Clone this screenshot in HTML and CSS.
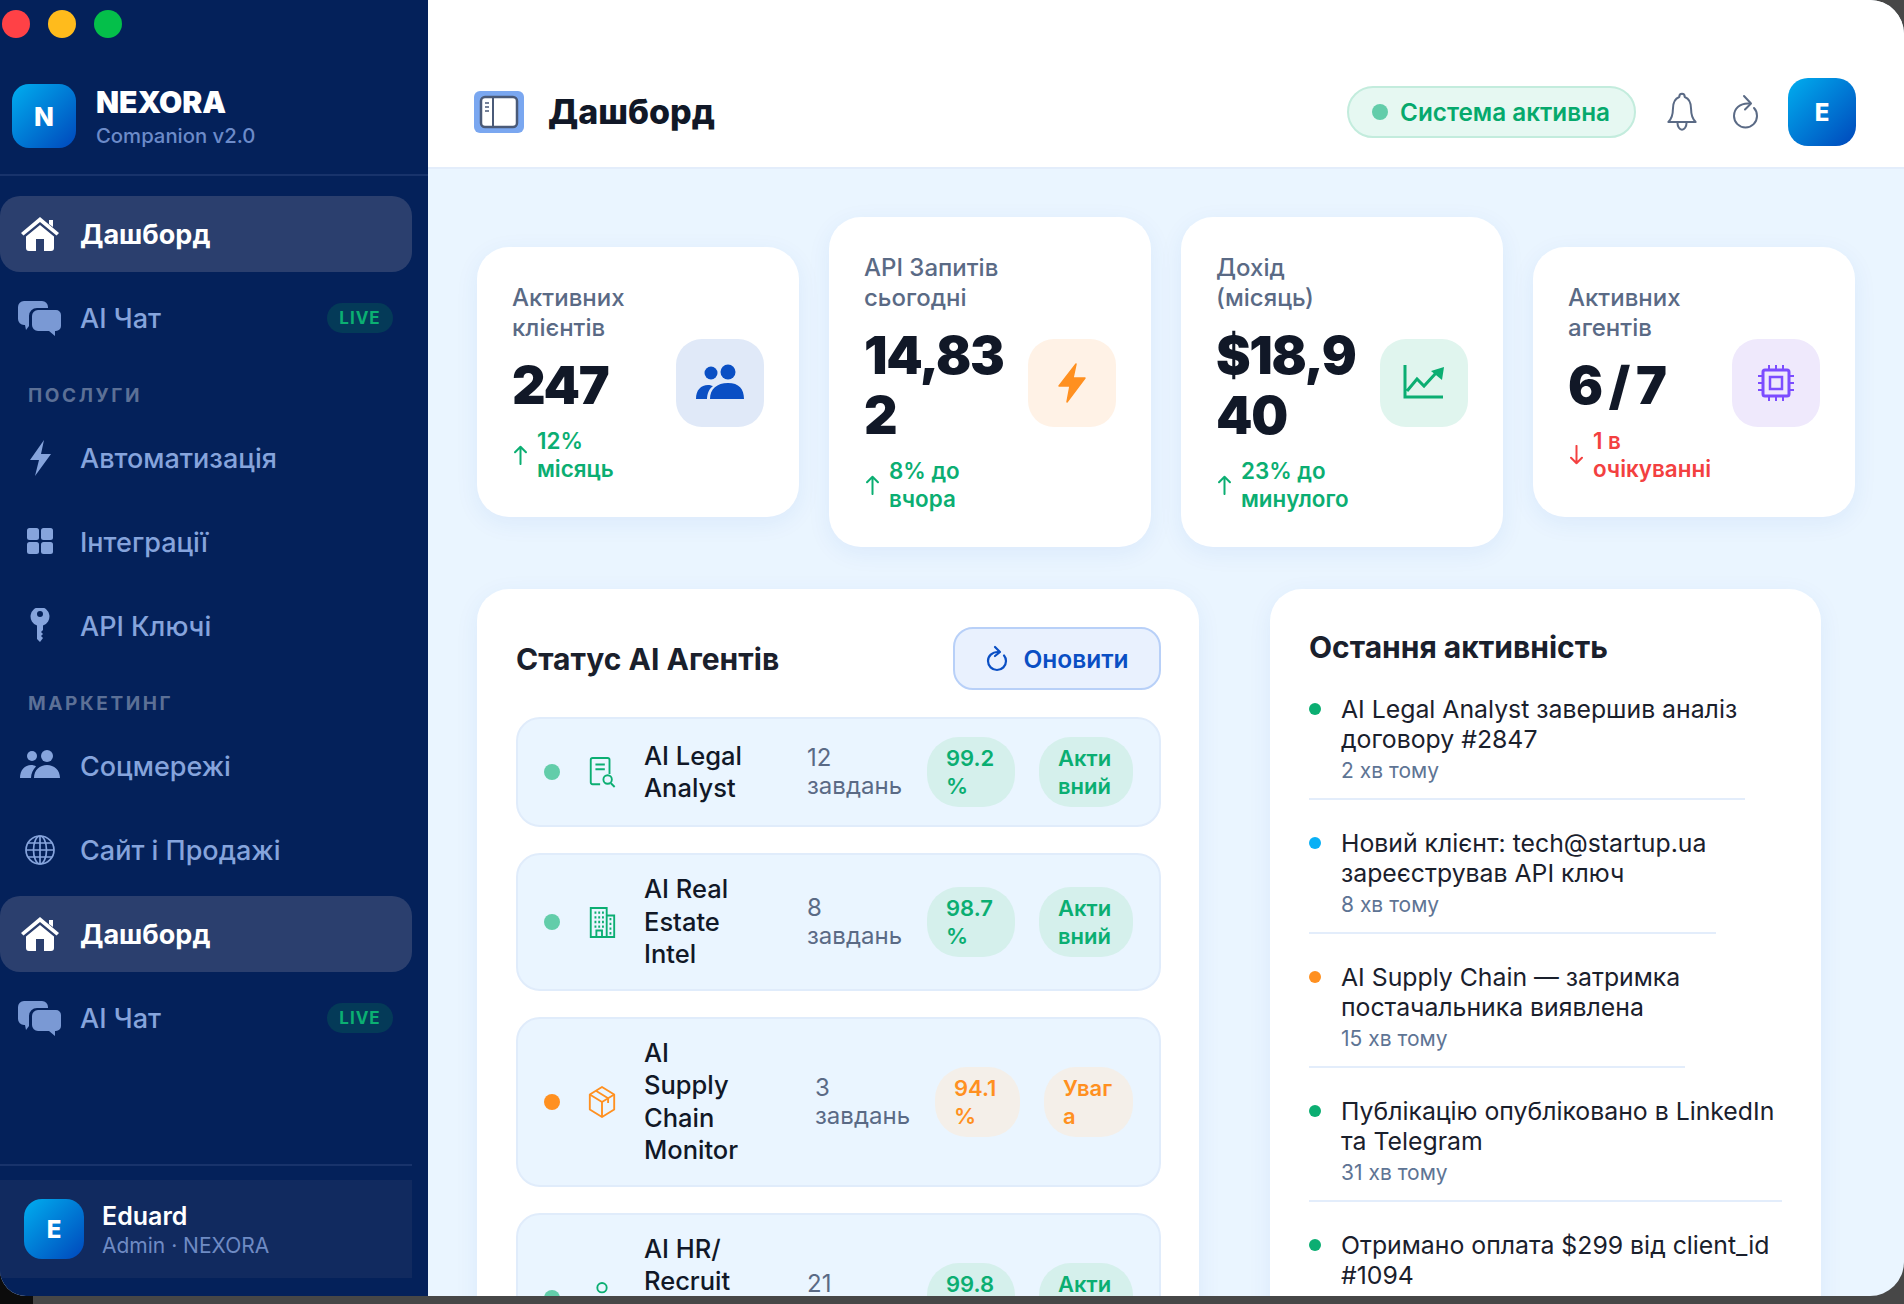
FILE: index.html
```html
<!DOCTYPE html>
<html lang="uk">
<head>
<meta charset="utf-8">
<title>NEXORA Companion</title>
<link rel="stylesheet" href="styles.css">
</head>
<body>
<div class="window">
  <aside class="sidebar">
    <div class="lights"><span class="light red"></span><span class="light yellow"></span><span class="light green"></span></div>
    <div class="brand">
      <div class="logo">N</div>
      <div class="brand-text"><div class="brand-name">NEXORA</div><div class="brand-sub">Companion v2.0</div></div>
    </div>
    <nav class="nav">
      <a class="nav-item active"><svg class="nav-icon" viewBox="0 0 40 36"><path fill="currentColor" d="M20 1 L39 17 L36.5 19.5 L20 6 L3.5 19.5 L1 17 Z M29 4h4v7l-4-3z"/><path fill="currentColor" fill-rule="evenodd" d="M20 9 L34 20.5V32a3 3 0 0 1-3 3H9a3 3 0 0 1-3-3V20.5Z M16 23v12h8V23Z"/></svg><span>Дашборд</span></a>
      <a class="nav-item"><svg class="nav-icon chat" viewBox="0 0 44 36"><path fill="currentColor" d="M6 1h18a6 6 0 0 1 6 6v1H19a8 8 0 0 0-8 8v10l-3 4-1-5H6a6 6 0 0 1-6-6V7a6 6 0 0 1 6-6z"/><path fill="currentColor" d="M20 10h18a5 5 0 0 1 5 5v11a5 5 0 0 1-5 5h-1v5l-6-5H20a6 6 0 0 1-6-6V16a6 6 0 0 1 6-6z"/></svg><span>AI Чат</span><span class="live">LIVE</span></a>
      <div class="nav-label">ПОСЛУГИ</div>
      <a class="nav-item"><svg class="nav-icon" viewBox="0 0 40 36"><path fill="currentColor" d="M24 0 L10 20 H19 L15 36 L31 14 H21 Z"/></svg><span>Автоматизація</span></a>
      <a class="nav-item"><svg class="nav-icon" viewBox="0 0 40 36"><rect fill="currentColor" x="7" y="4" width="12" height="12" rx="2.5"/><rect fill="currentColor" x="21" y="4" width="12" height="12" rx="2.5"/><rect fill="currentColor" x="7" y="18" width="12" height="12" rx="2.5"/><rect fill="currentColor" x="21" y="18" width="12" height="12" rx="2.5"/></svg><span>Інтеграції</span></a>
      <a class="nav-item"><svg class="nav-icon" viewBox="0 0 40 36"><path fill="currentColor" fill-rule="evenodd" d="M20-1a9.500 9.500 0 0 1 3 18.500V22l-2 2 2 2-2 2 2 2-3 4-3-3V17.500A9.500 9.500 0 0 1 20-1Zm0 4a3 3 0 1 0 0 6 3 3 0 0 0 0-6Z"/></svg><span>API Ключі</span></a>
      <div class="nav-label">МАРКЕТИНГ</div>
      <a class="nav-item"><svg class="nav-icon" viewBox="0 0 40 36"><circle fill="currentColor" cx="12" cy="8" r="5"/><circle fill="currentColor" cx="27" cy="8" r="6"/><path fill="currentColor" d="M0 30c0-8 5-13 11-13 2 0 4 .5 5 1.500-3 3-5 7-5 11.500zM14 30c0-8 6-13 13-13s13 5 13 13z"/></svg><span>Соцмережі</span></a>
      <a class="nav-item"><svg class="nav-icon" viewBox="0 0 40 36" fill="none" stroke="currentColor" stroke-width="1.700"><circle cx="20" cy="18" r="14"/><ellipse cx="20" cy="18" rx="6.500" ry="14"/><path d="M20 4v28M6 18h28M8 11h24M8 25h24"/></svg><span>Сайт і Продажі</span></a>
      <a class="nav-item active"><svg class="nav-icon" viewBox="0 0 40 36"><path fill="currentColor" d="M20 1 L39 17 L36.5 19.5 L20 6 L3.5 19.5 L1 17 Z M29 4h4v7l-4-3z"/><path fill="currentColor" fill-rule="evenodd" d="M20 9 L34 20.5V32a3 3 0 0 1-3 3H9a3 3 0 0 1-3-3V20.5Z M16 23v12h8V23Z"/></svg><span>Дашборд</span></a>
      <a class="nav-item"><svg class="nav-icon chat" viewBox="0 0 44 36"><path fill="currentColor" d="M6 1h18a6 6 0 0 1 6 6v1H19a8 8 0 0 0-8 8v10l-3 4-1-5H6a6 6 0 0 1-6-6V7a6 6 0 0 1 6-6z"/><path fill="currentColor" d="M20 10h18a5 5 0 0 1 5 5v11a5 5 0 0 1-5 5h-1v5l-6-5H20a6 6 0 0 1-6-6V16a6 6 0 0 1 6-6z"/></svg><span>AI Чат</span><span class="live">LIVE</span></a>
    </nav>
    <div class="side-foot">
      <div class="user">
        <div class="user-avatar">E</div>
        <div class="user-text"><div class="user-name">Eduard</div><div class="user-role">Admin · NEXORA</div></div>
      </div>
    </div>
  </aside>

  <main class="main">
    <header class="topbar">
      <div class="sidebar-toggle"><svg viewBox="0 0 50 42"><rect x="7" y="6" width="36" height="30" rx="4" fill="#fff" stroke="#4a5a78" stroke-width="2.500"/><path d="M19 6v30" stroke="#4a5a78" stroke-width="2"/><path d="M11 12h4M11 16h4M11 20h4" stroke="#4a5a78" stroke-width="1.500"/></svg></div>
      <h1 class="page-title">Дашборд</h1>
      <div class="status-pill"><span class="status-dot"></span>Система активна</div>
      <svg class="bell" viewBox="0 0 34 44" fill="none" stroke="#5a6a85" stroke-width="2.200" stroke-linejoin="round" stroke-linecap="round"><path d="M17 2c2 0 3 1.500 3 3.500C26 7.500 27 13 27 19c0 7 2 11 5 14H2c3-3 5-7 5-14 0-6 1-11.500 7-13.500C14 3.500 15 2 17 2Z"/><path d="M12 33.500c0 5 2.500 8 5 8s5-3 5-8"/></svg>
      <svg class="reload" viewBox="0 0 28 38" fill="none" stroke="#5a6a85" stroke-width="2" stroke-linecap="round" stroke-linejoin="round"><path d="M18 10.500C9 10 3 15.500 3 23a11.500 11.500 0 0 0 23 0c0-3-1-6-3-8"/><path d="M13 3l7 7.500-6 6"/></svg>
      <div class="top-avatar">E</div>
    </header>

    <div class="content">
      <section class="stats">
        <article class="stat">
          <div class="stat-body">
            <div class="stat-label">Активних клієнтів</div>
            <div class="stat-value">247</div>
            <div class="delta up"><svg class="arrow" viewBox="0 0 16 22"><path d="M8 21V2M2 8l6-6 6 6"/></svg><span>12% місяць</span></div>
          </div>
          <div class="stat-icon blue"><svg viewBox="0 0 48 36"><circle cx="15" cy="8" r="6.500" fill="currentColor"/><circle cx="32" cy="7" r="7.500" fill="currentColor"/><path fill="currentColor" d="M0 34c0-9 5-14 12-14 2 0 3 .5 5 1-4 3-6 8-6 13zM14 34c0-10 7-16 18-16s16 6 16 16z"/></svg></div>
        </article>
        <article class="stat">
          <div class="stat-body">
            <div class="stat-label">API Запитів сьогодні</div>
            <div class="stat-value">14,832</div>
            <div class="delta up"><svg class="arrow" viewBox="0 0 16 22"><path d="M8 21V2M2 8l6-6 6 6"/></svg><span>8% до вчора</span></div>
          </div>
          <div class="stat-icon orange"><svg viewBox="0 0 48 40"><path fill="currentColor" stroke="currentColor" stroke-width="1.500" stroke-linejoin="round" d="M28 1 L11 23 H22 L19 39 L37 15 H25 Z"/></svg></div>
        </article>
        <article class="stat">
          <div class="stat-body">
            <div class="stat-label">Дохід (місяць)</div>
            <div class="stat-value">$18,940</div>
            <div class="delta up"><svg class="arrow" viewBox="0 0 16 22"><path d="M8 21V2M2 8l6-6 6 6"/></svg><span>23% до минулого</span></div>
          </div>
          <div class="stat-icon mint"><svg viewBox="0 0 48 40"><path fill="none" stroke="currentColor" stroke-width="3" d="M5 2v32h38M7 28l10-12 7 7 12-13"/><path fill="currentColor" d="M44 4l-2 13-11-9z"/></svg></div>
        </article>
        <article class="stat">
          <div class="stat-body">
            <div class="stat-label">Активних агентів</div>
            <div class="stat-value">6 / 7</div>
            <div class="delta down"><svg class="arrow" viewBox="0 0 16 22"><path d="M8 1v19M2 14l6 6 6-6"/></svg><span>1 в очікуванні</span></div>
          </div>
          <div class="stat-icon purple"><svg viewBox="0 0 48 40" fill="none" stroke="currentColor"><rect x="11" y="7" width="26" height="26" rx="2" stroke-width="3"/><rect x="18" y="14" width="12" height="12" stroke-width="2.500"/><path stroke-width="2" d="M17 2v4M24 2v4M31 2v4M17 34v4M24 34v4M31 34v4M6 13h4M6 20h4M6 27h4M38 13h4M38 20h4M38 27h4"/></svg></div>
        </article>
      </section>

      <section class="panels">
        <div class="panel agents">
          <div class="panel-head">
            <h2 class="panel-title">Статус AI Агентів</h2>
            <button class="refresh"><svg viewBox="0 0 24 28" fill="none" stroke="currentColor" stroke-width="2.200" stroke-linecap="round" stroke-linejoin="round"><path d="M13 7C7 7 3 11 3 16a9 9 0 0 0 18 0c0-2-.7-4-2-5.500"/><path d="M10 2l5 5-5 4"/></svg>Оновити</button>
          </div>
          <div class="agent">
            <span class="dot ok"></span>
            <svg class="agent-icon ok-ico" viewBox="0 0 32 36" fill="none" stroke="currentColor" stroke-width="2"><path d="M14 31H6a2 2 0 0 1-2-2V5a2 2 0 0 1 2-2h16a2 2 0 0 1 2 2v15"/><path d="M9 10h10M9 15h10"/><circle cx="22" cy="26" r="4.500"/><path d="M25.500 30l4 4"/></svg>
            <div class="agent-name">AI Legal Analyst</div>
            <div class="agent-tasks">12 завдань</div>
            <div class="pill good pct">99.2%</div>
            <div class="pill good state">Активний</div>
          </div>
          <div class="agent">
            <span class="dot ok"></span>
            <svg class="agent-icon ok-ico" viewBox="0 0 32 36" fill="none" stroke="currentColor" stroke-width="2"><path d="M4 34V3h17v31zM21 11h8v23H3M10 34v-7h6v7"/><path stroke-width="2.500" d="M8 8h2M12 8h2M16 8h2M8 13h2M12 13h2M16 13h2M8 18h2M12 18h2M16 18h2M8 23h2M12 23h2M16 23h2M24 15h2M24 20h2M24 25h2M24 30h2"/></svg>
            <div class="agent-name">AI Real Estate Intel</div>
            <div class="agent-tasks">8 завдань</div>
            <div class="pill good pct">98.7%</div>
            <div class="pill good state">Активний</div>
          </div>
          <div class="agent">
            <span class="dot warn"></span>
            <svg class="agent-icon warn-ico" viewBox="0 0 32 36" fill="none" stroke="currentColor" stroke-width="2" stroke-linejoin="round"><path d="M16 2l13 8v16l-13 8-13-8V10z"/><path d="M3 10l13 8 13-8M16 18v16M9.500 6l13 8v5"/></svg>
            <div class="agent-name">AI Supply Chain Monitor</div>
            <div class="agent-tasks">3 завдань</div>
            <div class="pill caution pct narrow">94.1%</div>
            <div class="pill caution state narrow-state">Увага</div>
          </div>
          <div class="agent">
            <span class="dot ok"></span>
            <svg class="agent-icon ok-ico" viewBox="0 0 32 36" fill="none" stroke="currentColor" stroke-width="2"><circle cx="16" cy="7" r="5"/><path d="M6 30c0-8 4-13 10-13s10 5 10 13"/></svg>
            <div class="agent-name">AI HR/ Recruit Agent Bot</div>
            <div class="agent-tasks">21 завдань</div>
            <div class="pill good pct">99.8%</div>
            <div class="pill good state">Активний</div>
          </div>
        </div>

        <div class="panel activity">
          <h2 class="panel-title">Остання активність</h2>
          <div class="feed">
            <div class="feed-item w1"><span class="feed-dot g"></span><div><div class="feed-text">AI Legal Analyst завершив аналіз договору #2847</div><div class="feed-time">2 хв тому</div></div></div>
            <div class="feed-item w2"><span class="feed-dot b"></span><div><div class="feed-text">Новий клієнт: tech@startup.ua зареєстрував API ключ</div><div class="feed-time">8 хв тому</div></div></div>
            <div class="feed-item w3"><span class="feed-dot o"></span><div><div class="feed-text">AI Supply Chain — затримка постачальника виявлена</div><div class="feed-time">15 хв тому</div></div></div>
            <div class="feed-item w4"><span class="feed-dot g"></span><div><div class="feed-text">Публікацію опубліковано в LinkedIn та Telegram</div><div class="feed-time">31 хв тому</div></div></div>
            <div class="feed-item w4"><span class="feed-dot g"></span><div><div class="feed-text">Отримано оплата $299 від client_id #1094</div><div class="feed-time">45 хв тому</div></div></div>
          </div>
        </div>
      </section>
    </div>
  </main>
</div>
</body>
</html>
```
FILE: styles.css
```css
* { box-sizing: border-box; }
html, body { margin: 0; height: 100%; overflow: hidden; }
body {
  background: linear-gradient(90deg, #0c0c0c 0 33px, #474747 33px);
  font-family: "Inter", "Noto Sans", sans-serif;
  color: #111827;
}
.window {
  display: flex;
  width: 1904px;
  height: 1296px;
  overflow: hidden;
  border-radius: 0 34px 34px 26px;
  background: #eaf5ff;
}

/* Sidebar */
.sidebar {
  flex: none;
  width: 428px;
  background: #04215a;
  display: flex;
  flex-direction: column;
}
.lights { display: flex; gap: 18px; padding: 10px 0 0 2px; }
.light { width: 28px; height: 28px; border-radius: 50%; }
.red { background: #ff4146; }
.yellow { background: #ffbb1c; }
.green { background: #04bf4a; }
.brand {
  display: flex;
  align-items: center;
  gap: 20px;
  height: 138px;
  padding: 46px 0 26px 12px;
  border-bottom: 2px solid #18336b;
}
.logo, .user-avatar, .top-avatar {
  display: flex;
  align-items: center;
  justify-content: center;
  background: linear-gradient(135deg, #00aeef, #0047bb);
  color: #fff;
  font-weight: 800;
}
.logo { flex: none; width: 64px; height: 64px; border-radius: 17px; font-size: 26px; }
.brand-text { margin-top: 3px; }
.brand-name { font-size: 30px; font-weight: 900; color: #fff; line-height: 34px; }
.brand-sub { margin-top: 2px; font-size: 20.300px; font-weight: 500; color: #6c8bc9; line-height: 30px; }

.nav { display: flex; flex-direction: column; gap: 8px; padding: 20px 16px 0 0; }
.nav-item {
  display: flex;
  align-items: center;
  height: 76px;
  padding: 0 19px 0 20px;
  border-radius: 20px;
  color: #86a4dc;
  font-size: 27px;
  font-weight: 500;
}
.nav-item.active { background: #2b3f6e; color: #fff; font-weight: 700; }
.nav-icon { flex: none; width: 40px; height: 36px; margin-right: 20px; }
.nav-icon.chat { color: #7a99d4; width: 44px; margin-left: -2px; margin-right: 18px; }
.live {
  margin-left: auto;
  width: 66px;
  height: 30px;
  border-radius: 15px;
  background: #043a58;
  color: #0bb072;
  font-size: 17px;
  font-weight: 700;
  letter-spacing: 1px;
  line-height: 30px;
  text-align: center;
}
.nav-label {
  height: 48px;
  padding: 20px 0 0 28px;
  color: #5c7096;
  font-size: 19px;
  font-weight: 700;
  letter-spacing: 2.600px;
  line-height: 24px;
}
.side-foot {
  margin: auto 16px 18px 0;
  padding-top: 14px;
  border-top: 2px solid #18336b;
}
.user {
  display: flex;
  align-items: center;
  gap: 18px;
  height: 98px;
  padding-left: 24px;
  background: #112a5f;
}
.user-avatar { flex: none; width: 60px; height: 60px; border-radius: 18px; font-size: 24px; }
.user-text { padding-top: 2px; }
.user-name { color: #fff; font-size: 25px; font-weight: 600; line-height: 32px; }
.user-role { color: #6f8bc4; font-size: 21px; line-height: 28px; }

/* Main */
.main { flex: 1; min-width: 0; display: flex; flex-direction: column; }
.topbar {
  flex: none;
  display: flex;
  align-items: center;
  height: 169px;
  padding: 78px 48px 21px 46px;
  background: #fff;
  border-bottom: 2px solid #e3edfb;
}
.sidebar-toggle { flex: none; width: 50px; height: 42px; border-radius: 6px; background: #7aa7f0; margin-right: 24px; }
.sidebar-toggle svg { display: block; width: 50px; height: 42px; }
.page-title { margin: 0 auto 0 0; font-size: 34px; font-weight: 800; line-height: 40px; color: #111827; }
.status-pill {
  display: flex;
  align-items: center;
  gap: 12px;
  height: 52px;
  padding: 0 24px 0 23px;
  border: 2px solid #c3ecdd;
  border-radius: 26px;
  background: #e6f8f2;
  color: #06a96d;
  font-size: 24.300px;
  font-weight: 600;
  white-space: nowrap;
}
.status-dot { width: 16px; height: 16px; border-radius: 50%; background: #63cdaa; }
.bell { width: 32px; height: 40px; margin-left: 30px; }
.reload { width: 28px; height: 38px; margin-left: 33px; }
.top-avatar { width: 68px; height: 68px; border-radius: 20px; font-size: 24px; margin-left: 29px; }

.content { flex: 1; min-height: 0; padding: 48px 49px 0; overflow: hidden; }
.stats {
  display: grid;
  grid-template-columns: repeat(4, 322px);
  column-gap: 30px;
  align-items: center;
}
.stat {
  display: flex;
  align-items: center;
  justify-content: space-between;
  padding: 36px 35px 34px;
  border-radius: 32px;
  background: #fff;
  box-shadow: 0 6px 24px rgba(30, 90, 200, .07);
}
.stat-body { width: 148px; }
.stat-label { font-size: 24px; line-height: 30px; font-weight: 500; color: #5a6a85; }
.stat-value {
  margin: 13px 0 11px;
  font-size: 52px;
  font-weight: 900;
  letter-spacing: -1.300px;
  word-spacing: -2px;
  line-height: 60px;
  color: #111827;
  overflow-wrap: anywhere;
}
.delta { display: flex; align-items: center; gap: 9px; margin-left: 1px; font-size: 22.400px; line-height: 28px; font-weight: 600; }
.delta.up { color: #0bae72; }
.delta.down { color: #f34040; }
.arrow { flex: none; width: 15px; height: 20px; fill: none; stroke: currentColor; stroke-width: 2.200; stroke-linecap: round; stroke-linejoin: round; }
.stat-icon { flex: none; display: flex; align-items: center; justify-content: center; width: 88px; height: 88px; border-radius: 26px; }
.stat-icon svg { width: 48px; height: 40px; }
.blue { background: #e0e9f8; color: #0a4fc4; }
.orange { background: #fff2e6; color: #ff9020; }
.mint { background: #e0f5ee; color: #0bae72; }
.purple { background: #efe9fc; color: #7c4dff; }

.panels {
  display: grid;
  grid-template-columns: 722px 551px;
  column-gap: 71px;
  align-items: start;
  margin-top: 42px;
}
.panel {
  padding: 39px;
  border-radius: 32px;
  background: #fff;
  box-shadow: 0 6px 24px rgba(30, 90, 200, .07);
}
.panel-head { display: flex; align-items: center; justify-content: space-between; margin-bottom: 27px; }
.panel.agents { padding-right: 38px; }
.panel-title { margin: 0; font-size: 30px; font-weight: 700; line-height: 38px; color: #1a202c; }
.refresh {
  display: flex;
  align-items: center;
  justify-content: center;
  gap: 14px;
  width: 208px;
  height: 63px;
  margin-top: -1px;
  border: 2px solid #b8d0f8;
  border-radius: 20px;
  background: #e9f1fe;
  color: #0a4fc4;
  font: 600 24.500px "Inter", sans-serif;
}
.refresh svg { width: 24px; height: 28px; }
.agent {
  display: flex;
  align-items: center;
  margin-bottom: 26px;
  padding: 18px 26px;
  border: 2px solid #e0ecfb;
  border-radius: 24px;
  background: #eaf5ff;
}
.dot { flex: none; width: 16px; height: 16px; border-radius: 50%; margin-right: 27px; }
.dot.ok { background: #63cdaa; }
.dot.warn { background: #ff9020; }
.agent-icon { flex: none; width: 30px; height: 34px; margin-right: 27px; }
.ok-ico { color: #0bae72; }
.warn-ico { color: #ff9020; }
.agent-name { width: 105px; margin-right: auto; font-size: 25.500px; font-weight: 500; line-height: 32.500px; color: #111827; }
.agent-tasks { flex: none; width: 96px; margin-right: 24px; font-size: 24px; line-height: 28px; color: #5a6a85; }
.pill {
  flex: none;
  padding: 7px 14px 7px 19px;
  border-radius: 32px;
  font-size: 22px;
  font-weight: 600;
  line-height: 28px;
  overflow-wrap: anywhere;
}
.pct { width: 88px; margin-right: 24px; }
.state { width: 94px; }
.pct.narrow { width: 85px; }
.state.narrow-state { width: 89px; }
.good { background: #d5f0ec; color: #0bae72; }
.caution { background: #f4efe9; color: #ff9020; }

.feed { margin-top: 28px; }
.feed-item {
  display: flex;
  gap: 20px;
  margin-bottom: 28px;
  padding-bottom: 13px;
  border-bottom: 2px solid #e3edfb;
}
.w1 { width: 436px; }
.w2 { width: 407px; }
.w3 { width: 376px; }
.w4 { width: 473px; }
.feed-dot { flex: none; width: 12px; height: 12px; margin-top: 9px; border-radius: 50%; }
.feed-dot.g { background: #0bae72; }
.feed-dot.b { background: #0ab0f5; }
.feed-dot.o { background: #ff9020; }
.feed-text { font-size: 24.800px; line-height: 30px; color: #1a202c; }
.feed-time { margin-top: 3px; font-size: 21px; line-height: 28px; color: #5e7494; }
```
